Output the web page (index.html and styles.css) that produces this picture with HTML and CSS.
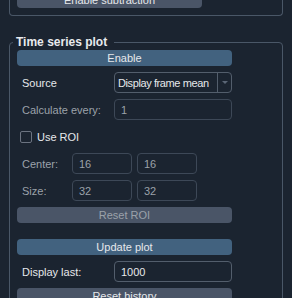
FILE: index.html
```html
<!DOCTYPE html>
<html>
<head>
<meta charset="utf-8">
<link rel="stylesheet" href="styles.css">
</head>
<body>
<div class="panel">
  <div class="group group-top">
    <button class="btn grey short">Enable subtraction</button>
  </div>
  <div class="group ts">
    <span class="title">Time series plot</span>
    <div class="col">
      <button class="btn blue">Enable</button>
      <div class="row">
        <span class="lbl">Source</span>
        <div class="select"><span class="sel-text">Display frame mean</span><span class="arrow"></span></div>
      </div>
      <div class="row">
        <span class="lbl dim">Calculate every:</span>
        <div class="input wide off">1</div>
      </div>
      <div class="row check-row">
        <span class="box"></span><span class="lbl-c">Use ROI</span>
      </div>
      <div class="row">
        <span class="lbl dim short-lbl">Center:</span>
        <div class="input small off">16</div>
        <div class="input small off">16</div>
      </div>
      <div class="row">
        <span class="lbl dim short-lbl">Size:</span>
        <div class="input small off">32</div>
        <div class="input small off">32</div>
      </div>
      <button class="btn grey off-btn">Reset ROI</button>
      <button class="btn blue spaced">Update plot</button>
      <div class="row">
        <span class="lbl">Display last:</span>
        <div class="input wide">1000</div>
      </div>
      <button class="btn grey">Reset history</button>
    </div>
  </div>
</div>
</body>
</html>
```
FILE: styles.css
```css
html, body {
  margin: 0;
  padding: 0;
  background: #1b2430;
  height: 100%;
  overflow: hidden;
}
body {
  font-family: "Liberation Sans", Arial, sans-serif;
  font-size: 11px;
  color: #e6e8eb;
}
.panel {
  padding: 0 9px;
}
.group {
  border: 1px solid #4a5767;
  border-radius: 4px;
  padding: 7px 7px 7px 7px;
}
.group-top {
  border-top: none;
  border-radius: 0 0 4px 4px;
  margin-top: -8px;
  padding-top: 0;
}
.ts {
  position: relative;
  margin-top: 26px;
  padding-bottom: 20px;
}
.title {
  position: absolute;
  top: -8px;
  left: 3px;
  padding: 0 7px 0 3px;
  background: #1b2430;
  font-weight: bold;
  font-size: 12px;
  line-height: 14px;
  color: #e8eaed;
}
.col {
  width: 215px;
  display: flex;
  flex-direction: column;
  gap: 6px;
}
.btn {
  display: block;
  height: 16px;
  width: 215px;
  padding: 0;
  border: none;
  border-radius: 4px;
  font-family: inherit;
  font-size: 11px;
  line-height: 16px;
  color: #e6e8eb;
  text-align: center;
}
.btn.short { width: 185px; }
.blue { background: #42627f; }
.grey { background: #4a5567; }
.off-btn { color: #9ba2aa; }
.spaced { margin-top: 10px; }
.row {
  display: flex;
  align-items: center;
  height: 21px;
  gap: 5px;
}
.lbl {
  box-sizing: border-box;
  width: 92px;
  padding-left: 5px;
  flex: none;
  white-space: nowrap;
}
.short-lbl { width: 50px; }
.dim { color: #9ba2aa; }
.select, .input {
  box-sizing: border-box;
  height: 21px;
  border: 1px solid #535e6c;
  border-radius: 4px;
  display: flex;
  align-items: center;
  flex: none;
}
.select {
  width: 118px;
  padding-left: 3px;
}
.sel-text {
  flex: 1;
  white-space: nowrap;
  overflow: hidden;
  letter-spacing: -0.4px;
}
.arrow {
  width: 13px;
  height: 19px;
  border-left: 1px solid #535e6c;
  position: relative;
  flex: none;
}
.arrow::after {
  content: "";
  position: absolute;
  left: 4px;
  top: 8px;
  border-left: 3px solid transparent;
  border-right: 3px solid transparent;
  border-top: 3px solid #5b6676;
}
.input {
  padding-left: 6px;
}
.input.wide { width: 118px; }
.input.small { width: 60px; }
.input.off {
  border-color: #3d4857;
  color: #9ba2aa;
}
.check-row {
  gap: 5px;
}
.box {
  box-sizing: border-box;
  width: 12px;
  height: 12px;
  margin-left: 3px;
  border: 1px solid #6b7380;
  border-radius: 2px;
}
.lbl-c { color: #e6e8eb; }
```
